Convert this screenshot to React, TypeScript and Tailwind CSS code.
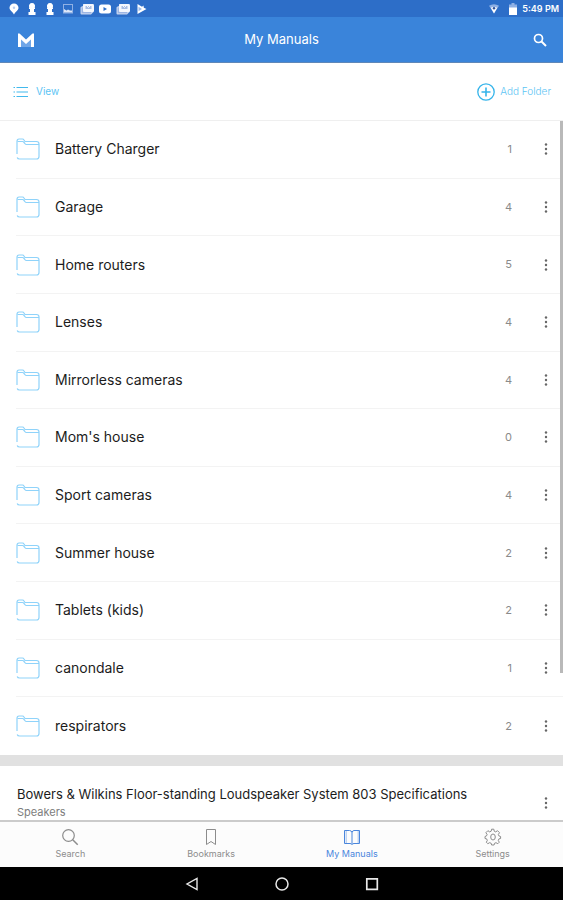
import React from 'react';

interface Folder {
  name: string;
  count: number;
}

const folders: Folder[] = [
  { name: 'Battery Charger', count: 1 },
  { name: 'Garage', count: 4 },
  { name: 'Home routers', count: 5 },
  { name: 'Lenses', count: 4 },
  { name: 'Mirrorless cameras', count: 4 },
  { name: "Mom's house", count: 0 },
  { name: 'Sport cameras', count: 4 },
  { name: 'Summer house', count: 2 },
  { name: 'Tablets (kids)', count: 2 },
  { name: 'canondale', count: 1 },
  { name: 'respirators', count: 2 },
];

function KeyholeIcon() {
  return (
    <svg viewBox="0 0 12 12" className="size-3" fill="#fff">
      <path d="M6 0a3 3 0 0 1 2.600 4.500H9V6H8v3h1.500v3h-7V9H4V6H3V4.500h.4A3 3 0 0 1 6 0Z" />
    </svg>
  );
}

function NewsIcon() {
  return (
    <svg viewBox="0 0 14 12" className="h-3 w-3.5">
      <path d="M3 1h10.500v8L11 11.500H1.500Q.5 11.500.5 10.500V4.500Q.5 3.500 3 3Z" fill="#c3d2ee" />
      <rect x="3" y="1" width="11" height="8" rx="1.500" fill="#f4f7fd" />
      <path d="M5.500 3h6v3h-6Z" fill="#a9bde3" />
      <path d="M7 3 8.500 4.500 10 3" fill="none" stroke="#fff" strokeWidth=".9" />
      <path d="M2.300 4.500v5.200H11" fill="none" stroke="#86a5dc" strokeWidth=".8" />
    </svg>
  );
}

function StatusBar() {
  return (
    <div className="flex h-[17px] shrink-0 items-center justify-between bg-[#2d6ec8] pr-1 pl-2">
      <div className="grid grid-cols-[repeat(8,18px)] items-center">
        <svg viewBox="0 0 12 12" className="size-3">
          <path d="M6 .5a4.500 4.300 0 0 1 4.500 4.300C10.500 7.500 7.500 8.500 6 11.500 4.500 8.500 1.500 7.500 1.500 4.800A4.500 4.300 0 0 1 6 .5Z" fill="#fff" />
          <circle cx="6" cy="4.700" r="1.200" fill="#b9cff1" />
        </svg>
        <KeyholeIcon />
        <KeyholeIcon />
        <svg viewBox="0 0 12 12" className="size-3">
          <rect x="1.500" y="1.500" width="9" height="8.500" fill="none" stroke="#8fb0e4" />
          <path d="M2 9.500V6l2.500 1.500L6 6.500l2 1h2v2Z" fill="#dbe6f8" />
        </svg>
        <NewsIcon />
        <svg viewBox="0 0 14 12" className="h-3 w-3.5">
          <rect x="1" y="1.500" width="12" height="9" rx="2.500" fill="#fff" />
          <path d="M5.500 4v4L9 6Z" fill="#2d6ec8" />
        </svg>
        <NewsIcon />
        <svg viewBox="0 0 12 12" className="ml-0.5 size-3">
          <path d="M1.500 1 6 3.700 7.500 2.500 7.800 4.800 10.500 6 1.500 11Z" fill="#fff" />
          <path d="m2.500 3.800 3.500 2.200-3.500 2.200Z" fill="#9dbbe9" />
        </svg>
      </div>
      <div className="flex items-center">
        <svg viewBox="0 0 12 12" className="mr-2 size-3">
          <path d="M1 2.800q5-3 10 0L6 10.500Z" fill="#8fb0e4" />
          <path d="M2.800 4.800q3.200-1.800 6.400 0L6 10.500Z" fill="#fff" />
          <circle cx="6" cy="5.200" r="1.200" fill="#2d4f98" />
        </svg>
        <svg viewBox="0 0 10 12" className="mr-1 h-3 w-2.5">
          <path d="M3.500 0h3v1.500H9V12H1V1.500h2.500Z" fill="#8fb0e4" />
          <path d="M1 4.500h8V12H1Z" fill="#fff" />
        </svg>
        <span className="text-[9px] leading-4 font-semibold text-white">5:49 PM</span>
      </div>
    </div>
  );
}

function AppBar() {
  return (
    <header className="grid h-[46px] shrink-0 grid-cols-[1fr_auto_1fr] items-center border-b border-[#5f87b8] bg-[#3a84da] px-4">
      <svg viewBox="0 0 20 16" className="h-4 w-5">
        <path d="M5 7v8h10V7l-5 4Z" fill="#6fa6e8" />
        <path d="M2 1.500h1.500L10 7.500l6.500-6H18V15h-3V7.500L10 12 5 7.500V15H2Z" fill="#fff" />
      </svg>
      <h1 className="text-[13px] text-white">My Manuals</h1>
      <button type="button" aria-label="Search" className="justify-self-end">
        <svg viewBox="0 0 14 14" className="size-3.5" fill="none" stroke="#fff">
          <circle cx="5.500" cy="5.500" r="4" strokeWidth="1.700" />
          <path d="m8.500 8.500 4.500 4.500" strokeWidth="2" />
        </svg>
      </button>
    </header>
  );
}

function Toolbar() {
  return (
    <div className="flex h-[58px] shrink-0 items-center justify-between border-b border-[#efefef] px-3 text-[10px] text-[#5cc4f4]">
      <button type="button" className="flex items-center gap-2">
        <svg viewBox="0 0 16 14" className="h-3.5 w-4" fill="none" stroke="#42b9ed" strokeWidth="1.200">
          <path d="M4.500 2.500H16M4.500 7H16M4.500 11.500H16M1.500 2.500H3M1.500 7H3M1.500 11.500H3" />
        </svg>
        View
      </button>
      <button type="button" className="flex items-center gap-1 font-light">
        <svg viewBox="0 0 20 20" className="size-5" fill="none" stroke="#35b4ea">
          <circle cx="10" cy="10" r="8.200" strokeWidth="1.300" />
          <path d="M10 5.500v9M5.500 10h9" strokeWidth="1.600" />
        </svg>
        Add Folder
      </button>
    </div>
  );
}

function FolderIcon() {
  return (
    <svg viewBox="0 0 24 24" className="size-6" fill="none" stroke="#8fd3fa" strokeWidth="1.200" strokeLinejoin="round">
      <path d="M1 17V4.500Q1 2 3 2h3.500q1 0 1.500 1l1 1.500h11.500q2.500 0 2.500 2.500v12.500q0 2.500-2.500 2.500H3.500Q1.700 22 1.200 20.500" />
      <path d="M1.500 4.500h5q1 0 1.500 1l1 1.200q.5.800 1.500.800H23" />
    </svg>
  );
}

function MoreButton({ label }: { label: string }) {
  return (
    <button type="button" aria-label={label} className="flex w-3 justify-center">
      <svg viewBox="0 0 4 14" className="h-3.5 w-1" fill="#666">
        <circle cx="2" cy="2.500" r="1.200" />
        <circle cx="2" cy="7" r="1.200" />
        <circle cx="2" cy="11.500" r="1.200" />
      </svg>
    </button>
  );
}

function FolderRow({ name, count }: Folder) {
  return (
    <li className="ml-4 flex items-center border-b border-[#f3f3f3] pr-[11px] last:border-b-0">
      <FolderIcon />
      <span className="ml-[15px] flex-1 text-sm text-[#1c1c1c]">{name}</span>
      <span className="mr-7 text-[11px] text-[#8a8a8a]">{count}</span>
      <MoreButton label={`Options for ${name}`} />
    </li>
  );
}

interface TabProps {
  label: string;
  active?: boolean;
  children: React.ReactNode;
}

function Tab({ label, active, children }: TabProps) {
  return (
    <button
      type="button"
      className={`flex flex-col items-center justify-center ${active ? 'text-[#4a86dc]' : 'text-[#8c8c8c]'}`}
    >
      <svg viewBox="0 0 18 18" className="size-[18px]" fill="none" stroke="currentColor" strokeLinejoin="round">
        {children}
      </svg>
      <span className="text-[9px] leading-4">{label}</span>
    </button>
  );
}

function TabBar() {
  return (
    <nav className="grid h-[47px] shrink-0 grid-cols-4 border-t-2 border-[#cbcbcb] bg-[#fcfcfc]">
      <Tab label="Search">
        <circle cx="7.500" cy="7.500" r="5.800" strokeWidth="1.200" />
        <path d="m11.700 11.700 5 5" strokeWidth="1.500" />
      </Tab>
      <Tab label="Bookmarks">
        <path d="M4.500 1.500h9v15L9 13.500l-4.500 3Z" />
      </Tab>
      <Tab label="My Manuals" active>
        <path d="M9 4.500Q8.500 2.500 6.500 2.500h-5v13H7q1.500 0 2 1 .5-1 2-1h5.500v-13h-5.500Q9.500 2.500 9 4.500Z" />
        <path d="M9 4.500v12" />
        <path d="M3.200 2.500v13M15.200 2.500v13" strokeWidth=".5" />
      </Tab>
      <Tab label="Settings">
        <path d="m7.600 1.200-.4 2-1.500.700-1.800-1.200-2 2 1.200 1.800-.6 1.400-1.500.6v2l1.700.4.600 1.600-1 1.700 1.500 1.500 1.800-1 1.600.6.400 1.700h2.500l.4-1.700 1.500-.6 1.800 1 1.500-1.500-1-1.700.600-1.600 1.700-.4v-2l-1.700-.6-.6-1.400 1.200-1.800-2-2-1.800 1.200-1.500-.7-.4-2Z" />
        <ellipse cx="9" cy="9" rx="2.300" ry="3" />
      </Tab>
    </nav>
  );
}

function SystemNav() {
  return (
    <div className="flex h-[33px] shrink-0 items-center justify-center gap-[74px] bg-black">
      <button type="button" aria-label="Back">
        <svg viewBox="0 0 16 16" className="size-4" fill="none" stroke="#e8e8e8" strokeWidth="1.400">
          <path d="M13 2.500v11L3 8Z" />
        </svg>
      </button>
      <button type="button" aria-label="Home">
        <svg viewBox="0 0 16 16" className="size-4" fill="none" stroke="#e8e8e8" strokeWidth="1.500">
          <circle cx="8" cy="8" r="6" />
        </svg>
      </button>
      <button type="button" aria-label="Recent apps">
        <svg viewBox="0 0 16 16" className="size-4" fill="none" stroke="#e8e8e8" strokeWidth="1.700">
          <path d="M2.800 2.800h10.500v10.500H2.800Z" />
        </svg>
      </button>
    </div>
  );
}

export default function App() {
  return (
    <div className="flex h-screen flex-col bg-white font-['Inter',sans-serif]">
      <StatusBar />
      <AppBar />
      <Toolbar />
      <main className="relative flex min-h-0 flex-1 flex-col overflow-hidden">
        <ul className="grid flex-1 auto-rows-fr">
          {folders.map(folder => (
            <FolderRow key={folder.name} {...folder} />
          ))}
        </ul>
        <div className="h-[11px] shrink-0 bg-[#e1e1e1]" />
        <div className="flex h-[54px] shrink-0 items-end pr-[11px] pl-[17px]">
          <div className="min-w-0 flex-1">
            <p className="truncate text-[13px] leading-5 text-[#1c1c1c]">
              Bowers &amp; Wilkins Floor-standing Loudspeaker System 803 Specifications
            </p>
            <p className="text-[11px] leading-4 text-[#7d7d7d]">Speakers</p>
          </div>
          <div className="pb-2.5">
            <MoreButton label="Options for Bowers & Wilkins manual" />
          </div>
        </div>
        {/* scroll thumb */}
        <div className="absolute top-0 right-0 h-[79%] w-[3px] bg-[#b9b9b9]" />
      </main>
      <TabBar />
      <SystemNav />
    </div>
  );
}
